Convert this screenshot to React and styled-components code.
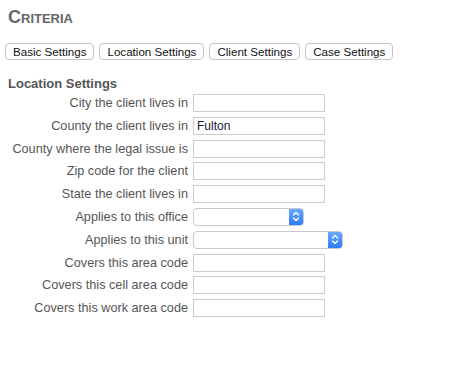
import React from 'react';
import styled, { createGlobalStyle } from 'styled-components';

const Global = createGlobalStyle`
  body {
    margin: 0;
    background: #fff;
    font-family: "Liberation Sans", Arial, sans-serif;
  }
`

const Page = styled.div`
  padding: 6px 0 0 5px;
`

const Title = styled.h1`
  margin: 0 0 0 3px;
  font-size: 18px;
  line-height: 22px;
  font-weight: bold;
  font-variant: small-caps;
  color: #666;
`

const Tabs = styled.div`
  display: flex;
  gap: 5px;
  margin-top: 15px;
`

const TabButton = styled.button`
  height: 17px;
  padding: 0 7px;
  border: 1px solid #c4c4c4;
  border-radius: 4px;
  background: #fff;
  font-family: "Liberation Sans", Arial, sans-serif;
  font-size: 11.6px;
  color: #111;
  line-height: 15px;
`

const Section = styled.div`
  margin-top: 16px;
  padding-left: 3px;
`

const SectionTitle = styled.div`
  font-size: 13px;
  font-weight: bold;
  line-height: 15px;
  color: #555;
`

const Form = styled.div`
  display: grid;
  grid-template-columns: 180px auto;
  column-gap: 5px;
  row-gap: 4.8px;
  margin-top: 3px;
  align-items: center;
`

const Label = styled.label`
  text-align: right;
  font-size: 12.7px;
  color: #555;
  white-space: nowrap;
`

const TextInput = styled.input`
  box-sizing: border-box;
  width: 132px;
  height: 18px;
  margin: 0;
  padding: 0 3px;
  border: 1px solid #ccc;
  font-family: "Liberation Sans", Arial, sans-serif;
  font-size: 12px;
  color: #1a1a3a;
  outline: none;
`

const SelectBox = styled.div`
  box-sizing: border-box;
  display: flex;
  width: ${p => p.$width}px;
  height: 18px;
  border: 1px solid #c8c8c8;
  border-radius: 4px;
  overflow: hidden;
  background: #fff;
`

const SelectField = styled.select`
  flex: 1;
  appearance: none;
  border: none;
  background: transparent;
  outline: none;
`

const Stepper = styled.div`
  width: 14px;
  display: flex;
  align-items: center;
  justify-content: center;
  background: linear-gradient(#6aa8ff, #2d7cf6);
`

const Chevrons = () => (
  <svg width="8" height="11" viewBox="0 0 8 11">
    <path d="M1.5 4 L4 1.5 L6.5 4 M1.5 7 L4 9.5 L6.5 7" fill="none" stroke="#fff" strokeWidth="1.3" strokeLinecap="round" strokeLinejoin="round" />
  </svg>
)

const rows = [
  { label: 'City the client lives in' },
  { label: 'County the client lives in', value: 'Fulton' },
  { label: 'County where the legal issue is' },
  { label: 'Zip code for the client' },
  { label: 'State the client lives in' },
  { label: 'Applies to this office', select: 111 },
  { label: 'Applies to this unit', select: 150 },
  { label: 'Covers this area code' },
  { label: 'Covers this cell area code' },
  { label: 'Covers this work area code' },
]

export default function App() {
  return (
    <Page>
      <Global />
      <Title>Criteria</Title>
      <Tabs>
        <TabButton>Basic Settings</TabButton>
        <TabButton>Location Settings</TabButton>
        <TabButton>Client Settings</TabButton>
        <TabButton>Case Settings</TabButton>
      </Tabs>
      <Section>
        <SectionTitle>Location Settings</SectionTitle>
        <Form>
          {rows.map((r, i) => (
            <React.Fragment key={i}>
              <Label>{r.label}</Label>
              {r.select ? (
                <SelectBox $width={r.select}>
                  <SelectField />
                  <Stepper><Chevrons /></Stepper>
                </SelectBox>
              ) : (
                <TextInput defaultValue={r.value || ''} />
              )}
            </React.Fragment>
          ))}
        </Form>
      </Section>
    </Page>
  );
}
